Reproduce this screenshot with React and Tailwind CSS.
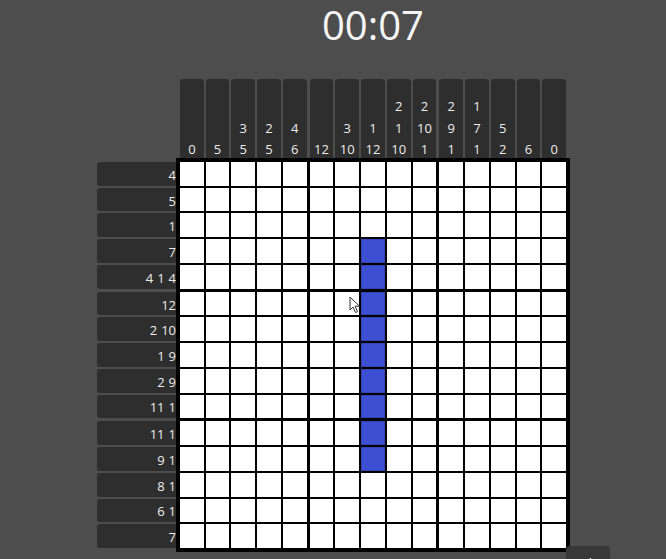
import React from "react";

const colClues = [
  [0], [5], [3, 5], [2, 5], [4, 6],
  [12], [3, 10], [1, 12], [2, 1, 10], [2, 10, 1],
  [2, 9, 1], [1, 7, 1], [5, 2], [6], [0],
];

const rowClues = [
  [4], [5], [1], [7], [4, 1, 4],
  [12], [2, 10], [1, 9], [2, 9], [11, 1],
  [11, 1], [9, 1], [8, 1], [6, 1], [7],
];

// filled cells as "row-col"
const filled = new Set([3, 4, 5, 6, 7, 8, 9, 10, 11].map((r) => `${r}-7`));

const groups = [0, 1, 2];
const five = [0, 1, 2, 3, 4];

const Cell = ({ r, c }) => {
  const on = filled.has(`${r}-${c}`);
  return (
    <div
      className={
        on
          ? "bg-[#3d4fd3] border border-[#3444b9]"
          : "bg-white"
      }
    />
  );
};

const Board = () => (
  <div className="w-[394px] h-[394px] bg-black p-[4px] grid grid-cols-3 grid-rows-3 gap-[3px]">
    {groups.map((br) =>
      groups.map((bc) => (
        <div key={`${br}-${bc}`} className="grid grid-cols-5 grid-rows-5 gap-[2px]">
          {five.map((i) =>
            five.map((j) => (
              <Cell key={`${i}-${j}`} r={br * 5 + i} c={bc * 5 + j} />
            ))
          )}
        </div>
      ))
    )}
  </div>
);

const ColumnClues = () => (
  <div className="w-[394px] px-[4px] grid grid-cols-3 gap-[3px]">
    {groups.map((g) => (
      <div key={g} className="grid grid-cols-5 gap-[2px]">
        {five.map((i) => (
          <div
            key={i}
            className="h-[79px] bg-[#2e2e2e] rounded-t-[3px] flex flex-col justify-end items-center gap-[5.5px] pb-[1px] text-[13px] leading-[16px] font-medium text-[#ececec]"
          >
            {colClues[g * 5 + i].map((n, k) => (
              <span key={k}>{n}</span>
            ))}
          </div>
        ))}
      </div>
    ))}
  </div>
);

const RowClues = () => (
  <div className="w-[79px] h-[394px] py-[4px] grid grid-rows-3 gap-[3px]">
    {groups.map((g) => (
      <div key={g} className="grid grid-rows-5 gap-[2px]">
        {five.map((i) => (
          <div
            key={i}
            className="bg-[#2e2e2e] rounded-l-[3px] flex items-center justify-end gap-[4px] pt-[3px] text-[13px] leading-none font-medium text-[#ececec]"
          >
            {rowClues[g * 5 + i].map((n, k) => (
              <span key={k}>{n}</span>
            ))}
          </div>
        ))}
      </div>
    ))}
  </div>
);

const Pointer = () => (
  <svg
    className="absolute left-[349px] top-[296px]"
    width="12"
    height="18"
    viewBox="0 0 12 18"
  >
    <path
      d="M1 1 L1 14 L4 11 L6.5 16.5 L8.5 15.6 L6 10.2 L10.5 10.2 Z"
      fill="white"
      stroke="#333"
      strokeWidth="1"
      strokeLinejoin="round"
    />
  </svg>
);

export default function App() {
  return (
    <div
      className="relative w-full h-[559px] overflow-hidden bg-[#4d4d4d]"
      style={{ fontFamily: '"Open Sans", "Noto Sans", sans-serif' }}
    >
      <div className="flex justify-center">
        <div className="grid grid-cols-[79px_394px] pl-[1px]">
          <div />
          <div className="h-[79px] pt-[1px] text-center text-[40px] leading-[48px] font-medium text-[#f5f5f5]">
            00:07
          </div>
          <div />
          <ColumnClues />
          <RowClues />
          <Board />
        </div>
      </div>

      <Pointer />

      <button className="absolute left-[566px] top-[546px] w-[44px] h-[30px] bg-[#383838] rounded-t-[4px] text-left pl-[9px] pt-[5px] text-[12px] leading-[14px] text-white overflow-hidden">
        Solve
      </button>
    </div>
  );
}
